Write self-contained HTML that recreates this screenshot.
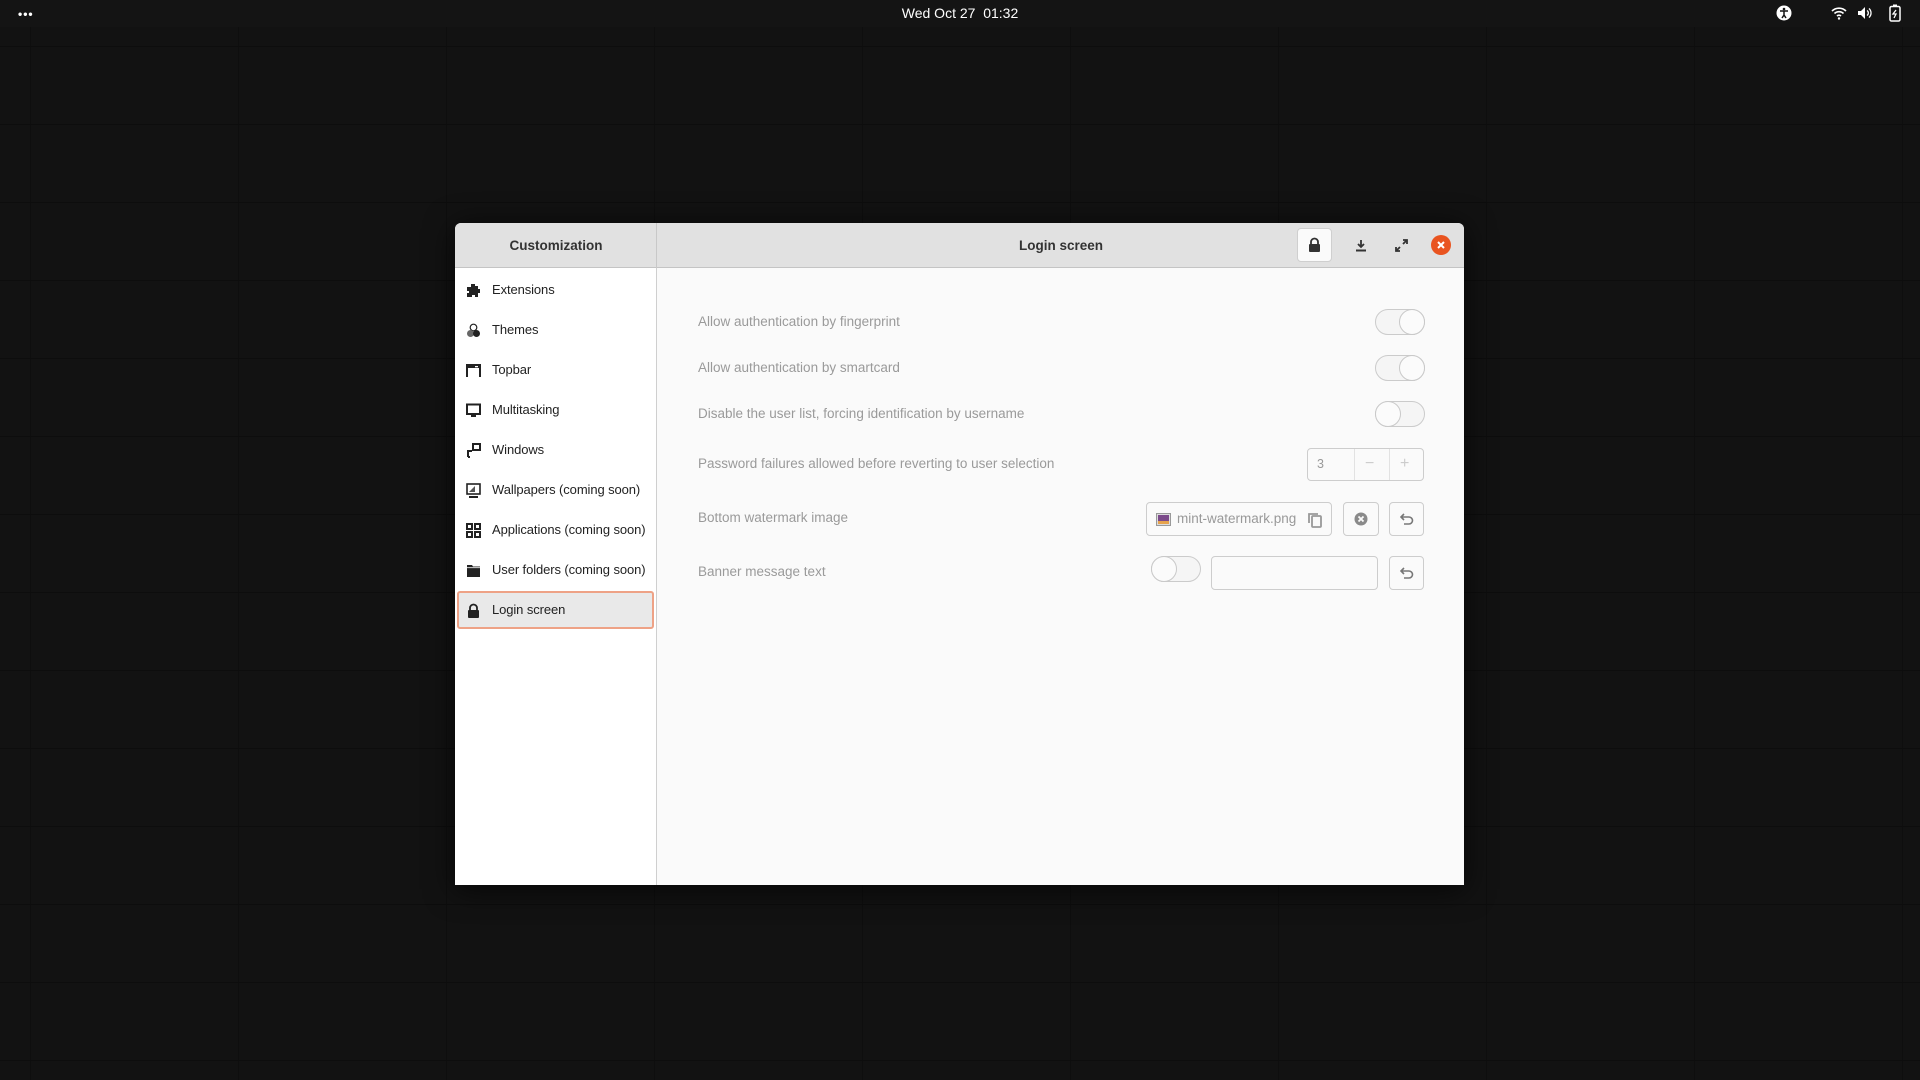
<!DOCTYPE html>
<html><head><meta charset="utf-8"><style>
*{margin:0;padding:0;box-sizing:border-box}
body{width:1920px;height:1080px;overflow:hidden;background:#121212;font-family:"Liberation Sans","DejaVu Sans",sans-serif;position:relative;
background-image:linear-gradient(#0d0d0d 1px,transparent 1px),linear-gradient(90deg,#0e0e0e 1px,transparent 1px);background-size:208px 78px;background-position:0 46px,30px 0}
.top{position:absolute;left:0;top:0;width:1920px;height:27px;background:#141414;color:#fff;font-size:14px}
.win{position:absolute;left:455px;top:223px;width:1009px;height:662px;background:#fafafa;box-shadow:0 4px 30px rgba(0,0,0,.7);border-radius:6px 6px 0 0;overflow:hidden}
.hdr{position:absolute;left:0;top:0;width:1009px;height:45px;background:#e1e1e1;border-bottom:1px solid #c4c4c4}
.side{position:absolute;left:0;top:45px;width:202px;height:617px;background:#fff;border-right:1px solid #cfcfcf}
.ht{position:absolute;top:15px;font-size:13.5px;font-weight:bold;color:#333}
.item{position:absolute;left:2px;width:197px;height:38px;font-size:13px;color:#222;line-height:38px;padding-left:35px;white-space:nowrap;letter-spacing:-0.1px}
.item svg{position:absolute;left:9px;top:12px}
.sel{background:#e9e9e9;border:2px solid #eea286;border-radius:3px;line-height:34px;padding-left:33px}
.sel svg{top:10px;left:7px}
.lbl{position:absolute;left:243px;font-size:13.5px;color:#9a9a9a}
.tg{position:absolute;width:50px;height:26px;border:1px solid #cbcbcb;border-radius:13px;background:#f5f5f5}
.tg i{position:absolute;top:-1px;width:26px;height:26px;border:1px solid #c9c9c9;border-radius:50%;background:#fbfbfb}
.bx{position:absolute;border:1px solid #cdcdcd;border-radius:4px;background:#fafafa}
</style></head><body>
<div class="top">
<div style="position:absolute;left:18px;top:7px;letter-spacing:1px;font-size:12px;font-weight:bold">•••</div>
<div style="position:absolute;left:0;width:1920px;text-align:center;top:5px;font-size:14px">Wed Oct 27&nbsp; 01:32</div>
<svg style="position:absolute;left:1776px;top:5px" width="16" height="16" viewBox="0 0 16 16"><circle cx="8" cy="8" r="7.5" fill="#fff"/><circle cx="8" cy="4" r="1.3" fill="#141414"/><path d="M4 6h8M8 6v4l-2 3M8 10l2 3" stroke="#141414" stroke-width="1.5" fill="none"/></svg>
<svg style="position:absolute;left:1831px;top:6px" width="16" height="14" viewBox="0 0 16 14"><path d="M1 5a10 10 0 0 1 14 0M3.5 7.5a6.5 6.5 0 0 1 9 0M6 10a3 3 0 0 1 4 0" stroke="#fff" stroke-width="1.6" fill="none"/><circle cx="8" cy="12.5" r="1.2" fill="#fff"/></svg>
<svg style="position:absolute;left:1857px;top:6px" width="16" height="14" viewBox="0 0 16 14"><path d="M1 5h3l4-4v12l-4-4H1z" fill="#fff"/><path d="M10 4.5a3 3 0 0 1 0 5M12 2.5a6 6 0 0 1 0 9" stroke="#fff" stroke-width="1.3" fill="none"/></svg>
<svg style="position:absolute;left:1889px;top:4px" width="12" height="18" viewBox="0 0 12 18"><rect x="1" y="2.5" width="10" height="14.5" rx="1.5" stroke="#fff" stroke-width="1.5" fill="none"/><rect x="4" y="0.5" width="4" height="2" fill="#fff"/><path d="M7 6l-3 4h3l-2 4" stroke="#fff" stroke-width="1.3" fill="none"/></svg>
</div>
<div class="win">
<div class="hdr">
<div style="position:absolute;left:201px;top:0;width:1px;height:45px;background:#c8c8c8"></div>
<div class="ht" style="left:0;width:202px;text-align:center">Customization</div>
<div class="ht" style="left:202px;width:808px;text-align:center">Login screen</div>
<div style="position:absolute;left:842px;top:5px;width:35px;height:34px;background:#fafafa;border:1px solid #cfcfcf;border-radius:4px"></div>
<svg style="position:absolute;left:853px;top:14px" width="13" height="15" viewBox="0 0 13 15"><path d="M3 7V5a3.5 3.5 0 0 1 7 0v2" stroke="#333" stroke-width="1.8" fill="none"/><rect x="1" y="7" width="11" height="8" rx="1" fill="#333"/></svg>
<svg style="position:absolute;left:900px;top:16px" width="12" height="13" viewBox="0 0 12 13"><path d="M6 1v7M3 5l3 3 3-3" stroke="#333" stroke-width="1.8" fill="none"/><rect x="1" y="10.5" width="10" height="2" fill="#333"/></svg>
<svg style="position:absolute;left:940px;top:16px" width="13" height="13" viewBox="0 0 13 13"><path d="M8 1h4v4M12 1L8 5M5 12H1V8M1 12l4-4" stroke="#333" stroke-width="1.8" fill="none"/></svg>
<div style="position:absolute;left:976px;top:12px;width:20px;height:20px;border-radius:50%;background:#e95420"></div>
<svg style="position:absolute;left:981px;top:17px" width="10" height="10" viewBox="0 0 10 10"><path d="M2 2l6 6M8 2l-6 6" stroke="#fff" stroke-width="2"/></svg>
</div>
<div class="side">
<div class="item" style="top:3px"><svg width="15" height="15" viewBox="0 0 15 15"><path d="M5 1h4v2h3v3h2v4h-2v4H9v-2H6v2H1v-4h2V8H1V4h4z" fill="#222"/></svg>Extensions</div>
<div class="item" style="top:43px"><svg width="15" height="15" viewBox="0 0 15 15"><circle cx="7.5" cy="4.5" r="3.3" fill="#fff" stroke="#222" stroke-width="1.2"/><circle cx="4.5" cy="10.5" r="3.5" fill="#666"/><circle cx="10.5" cy="10.5" r="3.5" fill="#222"/></svg>Themes</div>
<div class="item" style="top:83px"><svg width="15" height="15" viewBox="0 0 15 15"><path d="M1 14V2h13v12" stroke="#222" stroke-width="2" fill="none"/><rect x="1" y="1" width="13" height="4" fill="#222"/><rect x="9" y="3" width="3" height="1.3" fill="#fff"/></svg>Topbar</div>
<div class="item" style="top:123px"><svg width="15" height="15" viewBox="0 0 15 15"><rect x="1" y="1.5" width="13" height="9.5" stroke="#222" stroke-width="2" fill="none"/><rect x="5" y="12" width="5" height="2" fill="#222"/></svg>Multitasking</div>
<div class="item" style="top:163px"><svg width="15" height="15" viewBox="0 0 15 15"><path d="M2 14V8h4M2 14h2" stroke="#222" stroke-width="2" fill="none"/><rect x="7" y="1" width="7" height="6" stroke="#222" stroke-width="2" fill="none"/></svg>Windows</div>
<div class="item" style="top:203px"><svg width="15" height="16" viewBox="0 0 15 16"><rect x="1" y="1" width="13" height="10" stroke="#222" stroke-width="1.6" fill="none"/><path d="M3 9h6V3z" fill="#555"/><rect x="3" y="13" width="9" height="2" fill="#222"/></svg>Wallpapers (coming soon)</div>
<div class="item" style="top:243px"><svg width="15" height="15" viewBox="0 0 15 15"><g stroke="#222" stroke-width="2" fill="none"><rect x="1" y="1" width="5" height="5"/><rect x="9" y="1" width="5" height="5"/><rect x="1" y="9" width="5" height="5"/><rect x="9" y="9" width="5" height="5"/></g></svg>Applications (coming soon)</div>
<div class="item" style="top:283px"><svg width="15" height="15" viewBox="0 0 15 15"><path d="M1 2h5l1 1.5h7V14H1z" fill="#222"/><rect x="1" y="4.3" width="13" height="0.8" fill="#fff"/></svg>User folders (coming soon)</div>
<div class="item sel" style="top:323px"><svg width="15" height="15" viewBox="0 0 13 15"><path d="M3 7V5a3.5 3.5 0 0 1 7 0v2" stroke="#222" stroke-width="1.8" fill="none"/><rect x="1" y="7" width="11" height="8" rx="1" fill="#222"/></svg>Login screen</div>
</div>
<div class="lbl" style="top:91px">Allow authentication by fingerprint</div>
<div class="lbl" style="top:137px">Allow authentication by smartcard</div>
<div class="lbl" style="top:183px">Disable the user list, forcing identification by username</div>
<div class="lbl" style="top:233px">Password failures allowed before reverting to user selection</div>
<div class="lbl" style="top:287px">Bottom watermark image</div>
<div class="lbl" style="top:341px">Banner message text</div>
<div class="tg" style="left:920px;top:86px"><i style="left:23px"></i></div>
<div class="tg" style="left:920px;top:132px"><i style="left:23px"></i></div>
<div class="tg" style="left:920px;top:178px"><i style="left:-1px"></i></div>
<div class="bx" style="left:852px;top:225px;width:117px;height:33px"><span style="position:absolute;left:9px;top:8px;font-size:12.5px;color:#999">3</span><div style="position:absolute;left:46px;top:0;width:1px;height:31px;background:#e2e2e2"></div><div style="position:absolute;left:81px;top:0;width:1px;height:31px;background:#e2e2e2"></div><span style="position:absolute;left:57px;top:6px;color:#ccc;font-size:16px">−</span><span style="position:absolute;left:92px;top:6px;color:#ccc;font-size:16px">+</span></div>
<div class="bx" style="left:691px;top:279px;width:186px;height:34px"><svg style="position:absolute;left:9px;top:10px" width="15" height="13" viewBox="0 0 15 13"><rect x=".5" y=".5" width="14" height="12" fill="#ddd" stroke="#999"/><rect x="2" y="2" width="11" height="9" fill="#7b4a8a"/><rect x="2" y="8" width="11" height="3" fill="#e6a34d"/></svg><span style="position:absolute;left:30px;top:8px;font-size:13.5px;color:#999">mint-watermark.png</span><svg style="position:absolute;left:160px;top:8px" width="16" height="17" viewBox="0 0 16 17"><rect x="5" y="5" width="9" height="11" rx="1" stroke="#999" stroke-width="1.8" fill="none"/><path d="M2 12V3h9" stroke="#999" stroke-width="1.8" fill="none"/></svg></div>
<div class="bx" style="left:888px;top:279px;width:36px;height:34px"><svg style="position:absolute;left:10px;top:9px" width="14" height="14" viewBox="0 0 14 14"><circle cx="7" cy="7" r="6.5" fill="#8a8a8a"/><path d="M4.5 4.5l5 5M9.5 4.5l-5 5" stroke="#fafafa" stroke-width="1.8"/></svg></div>
<div class="bx" style="left:934px;top:279px;width:35px;height:34px"><svg style="position:absolute;left:10px;top:10px" width="14" height="13" viewBox="0 0 14 13"><path d="M4 1L1 4l3 3M1 4h8a3.5 3.5 0 0 1 0 7H4" stroke="#777" stroke-width="1.6" fill="none"/></svg></div>
<div class="tg" style="left:696px;top:333px"><i style="left:-1px"></i></div>
<div class="bx" style="left:756px;top:333px;width:167px;height:34px"></div>
<div class="bx" style="left:934px;top:333px;width:35px;height:34px"><svg style="position:absolute;left:10px;top:10px" width="14" height="13" viewBox="0 0 14 13"><path d="M4 1L1 4l3 3M1 4h8a3.5 3.5 0 0 1 0 7H4" stroke="#777" stroke-width="1.6" fill="none"/></svg></div>
</div>
</body></html>
